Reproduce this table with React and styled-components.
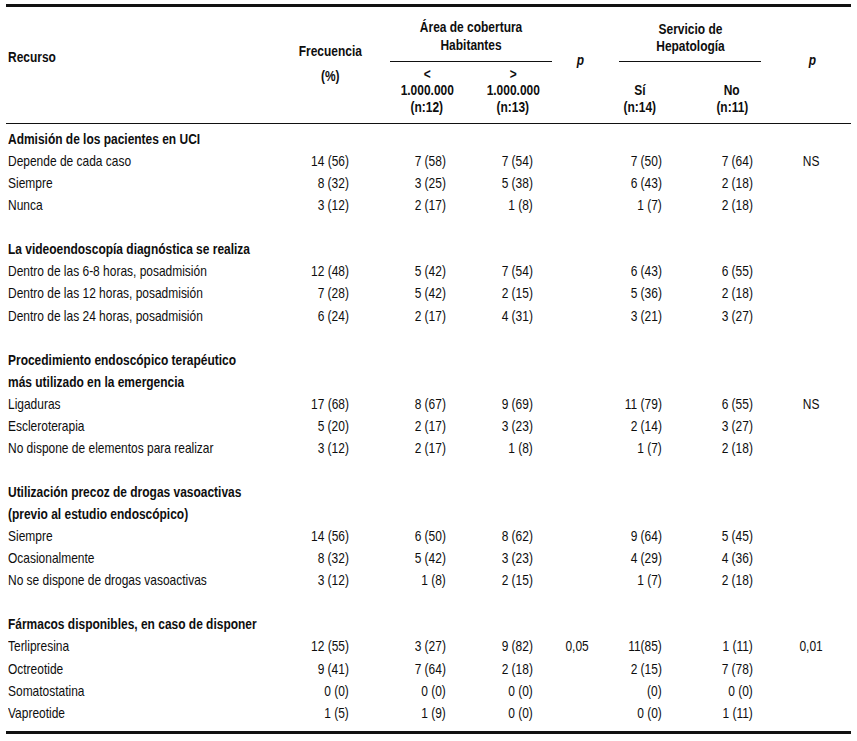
import styled, { createGlobalStyle } from "styled-components"

const GlobalStyle = createGlobalStyle`
  html, body {
    margin: 0;
    padding: 0;
    background: #ffffff;
  }
  body {
    font-family: "Liberation Sans", Arial, sans-serif;
    font-size: 14.5px;
    color: #0e0e0e;
  }
`

const COLS = "284px 80px 114px 58px 70px 56px 128px 55px"

// no condensed face installed, so the text is narrowed by hand
const Txt = styled.span`
  display: inline-block;
  white-space: nowrap;
  transform: scaleX(0.825);
  transform-origin: ${(p) => p.$o || "left"} center;
`

const Table = styled.div`
  margin: 4px 0 0 6px;
  width: 845px;
  border-top: 3px solid #111;
  border-bottom: 3px solid #111;
  padding-bottom: 7px;
`

const Head = styled.div`
  display: grid;
  grid-template-columns: ${COLS};
  grid-template-rows: 55px 61px;
  border-bottom: 1px solid #111;
  font-weight: 700;
`

const HeadCell = styled.div`
  grid-column: ${(p) => p.$col};
  grid-row: 1 / span 2;
  padding-top: ${(p) => p.$top}px;
  padding-left: ${(p) => p.$left || 0}px;
  padding-right: ${(p) => p.$right || 0}px;
  text-align: ${(p) => p.$align || "center"};
  line-height: ${(p) => p.$lh || 17}px;
  font-style: ${(p) => (p.$italic ? "italic" : "normal")};
`

const GroupHead = styled.div`
  grid-column: ${(p) => p.$col};
  grid-row: 1;
  margin: 0 ${(p) => p.$mr}px 0 ${(p) => p.$ml}px;
  padding-top: ${(p) => p.$top}px;
  line-height: ${(p) => p.$lh}px;
  border-bottom: 1px solid #111;
  text-align: center;
`

const SubHead = styled.div`
  grid-column: ${(p) => p.$col};
  grid-row: 2;
  display: flex;
  flex-direction: column;
  justify-content: flex-end;
  align-items: center;
  padding-bottom: 8px;
  line-height: 16.5px;
`

const Body = styled.div`
  padding-top: 4px;
`

const Group = styled.div`
  & + & {
    margin-top: 22.07px;
  }
`

const Row = styled.div`
  display: grid;
  grid-template-columns: ${COLS};
  height: 22.07px;
  line-height: 22.07px;
  white-space: nowrap;
`

const Label = styled.div`
  padding-left: 2px;
  font-weight: ${(p) => (p.$bold ? 700 : 400)};
`

const Num = styled.div`
  text-align: right;
  padding-right: ${(p) => p.$pr}px;
`

const PVal = styled.div`
  text-align: center;
  padding-right: ${(p) => p.$pr || 0}px;
`

const groups = [
  {
    title: ["Admisión de los pacientes en UCI"],
    rows: [
      ["Depende de cada caso", "14 (56)", "7 (58)", "7 (54)", "", "7 (50)", "7 (64)", "NS"],
      ["Siempre", "8 (32)", "3 (25)", "5 (38)", "", "6 (43)", "2 (18)", ""],
      ["Nunca", "3 (12)", "2 (17)", "1 (8)", "", "1 (7)", "2 (18)", ""],
    ],
  },
  {
    title: ["La videoendoscopía diagnóstica se realiza"],
    rows: [
      ["Dentro de las 6-8 horas, posadmisión", "12 (48)", "5 (42)", "7 (54)", "", "6 (43)", "6 (55)", ""],
      ["Dentro de las 12 horas, posadmisión", "7 (28)", "5 (42)", "2 (15)", "", "5 (36)", "2 (18)", ""],
      ["Dentro de las 24 horas, posadmisión", "6 (24)", "2 (17)", "4 (31)", "", "3 (21)", "3 (27)", ""],
    ],
  },
  {
    title: ["Procedimiento endoscópico terapéutico", "más utilizado en la emergencia"],
    rows: [
      ["Ligaduras", "17 (68)", "8 (67)", "9 (69)", "", "11 (79)", "6 (55)", "NS"],
      ["Escleroterapia", "5 (20)", "2 (17)", "3 (23)", "", "2 (14)", "3 (27)", ""],
      ["No dispone de elementos para realizar", "3 (12)", "2 (17)", "1 (8)", "", "1 (7)", "2 (18)", ""],
    ],
  },
  {
    title: ["Utilización precoz de drogas vasoactivas", "(previo al estudio endoscópico)"],
    rows: [
      ["Siempre", "14 (56)", "6 (50)", "8 (62)", "", "9 (64)", "5 (45)", ""],
      ["Ocasionalmente", "8 (32)", "5 (42)", "3 (23)", "", "4 (29)", "4 (36)", ""],
      ["No se dispone de drogas vasoactivas", "3 (12)", "1 (8)", "2 (15)", "", "1 (7)", "2 (18)", ""],
    ],
  },
  {
    title: ["Fármacos disponibles, en caso de disponer"],
    rows: [
      ["Terlipresina", "12 (55)", "3 (27)", "9 (82)", "0,05", "11(85)", "1 (11)", "0,01"],
      ["Octreotide", "9 (41)", "7 (64)", "2 (18)", "", "2 (15)", "7 (78)", ""],
      ["Somatostatina", "0 (0)", "0 (0)", "0 (0)", "", "(0)", "0 (0)", ""],
      ["Vapreotide", "1 (5)", "1 (9)", "0 (0)", "", "0 (0)", "1 (11)", ""],
    ],
  },
]

const DataRow = ({ cells }) => {
  const [label, freq, lo, hi, p1, si, no, p2] = cells
  return (
    <Row>
      <Label><Txt>{label}</Txt></Label>
      <Num $pr={21}><Txt $o="right">{freq}</Txt></Num>
      <Num $pr={38}><Txt $o="right">{lo}</Txt></Num>
      <Num $pr={9}><Txt $o="right">{hi}</Txt></Num>
      <PVal><Txt $o="center">{p1}</Txt></PVal>
      <Num $pr={6}><Txt $o="right">{si}</Txt></Num>
      <Num $pr={43}><Txt $o="right">{no}</Txt></Num>
      <PVal $pr={25}><Txt $o="center">{p2}</Txt></PVal>
    </Row>
  )
}

export default function App() {
  return (
    <>
      <GlobalStyle />
      <Table>
        <Head>
          <HeadCell $col="1" $top={42} $align="left" $left={2}>
            <Txt>Recurso</Txt>
          </HeadCell>
          <HeadCell $col="2" $top={32} $lh={25}>
            <Txt $o="center">
              Frecuencia
              <br />
              (%)
            </Txt>
          </HeadCell>
          <GroupHead $col="3 / span 2" $ml={20} $mr={-10} $top={11} $lh={18}>
            <Txt $o="center">
              Área de cobertura
              <br />
              Habitantes
            </Txt>
          </GroupHead>
          <SubHead $col="3">
            <Txt $o="center">&lt;</Txt>
            <Txt $o="center">1.000.000</Txt>
            <Txt $o="center">(n:12)</Txt>
          </SubHead>
          <SubHead $col="4">
            <Txt $o="center">&gt;</Txt>
            <Txt $o="center">1.000.000</Txt>
            <Txt $o="center">(n:13)</Txt>
          </SubHead>
          <HeadCell $col="5" $top={45} $italic $left={6}>
            <Txt $o="center">p</Txt>
          </HeadCell>
          <GroupHead $col="6 / span 2" $ml={7} $mr={35} $top={14} $lh={17}>
            <Txt $o="center">
              Servicio de
              <br />
              Hepatología
            </Txt>
          </GroupHead>
          <SubHead $col="6">
            <Txt $o="center">Sí</Txt>
            <Txt $o="center">(n:14)</Txt>
          </SubHead>
          <SubHead $col="7">
            <Txt $o="center">No</Txt>
            <Txt $o="center">(n:11)</Txt>
          </SubHead>
          <HeadCell $col="8" $top={45} $italic $right={23}>
            <Txt $o="center">p</Txt>
          </HeadCell>
        </Head>
        <Body>
          {groups.map((g) => (
            <Group key={g.title[0]}>
              {g.title.map((t) => (
                <Row key={t}>
                  <Label $bold><Txt>{t}</Txt></Label>
                </Row>
              ))}
              {g.rows.map((r) => (
                <DataRow key={r[0]} cells={r} />
              ))}
            </Group>
          ))}
        </Body>
      </Table>
    </>
  )
}
